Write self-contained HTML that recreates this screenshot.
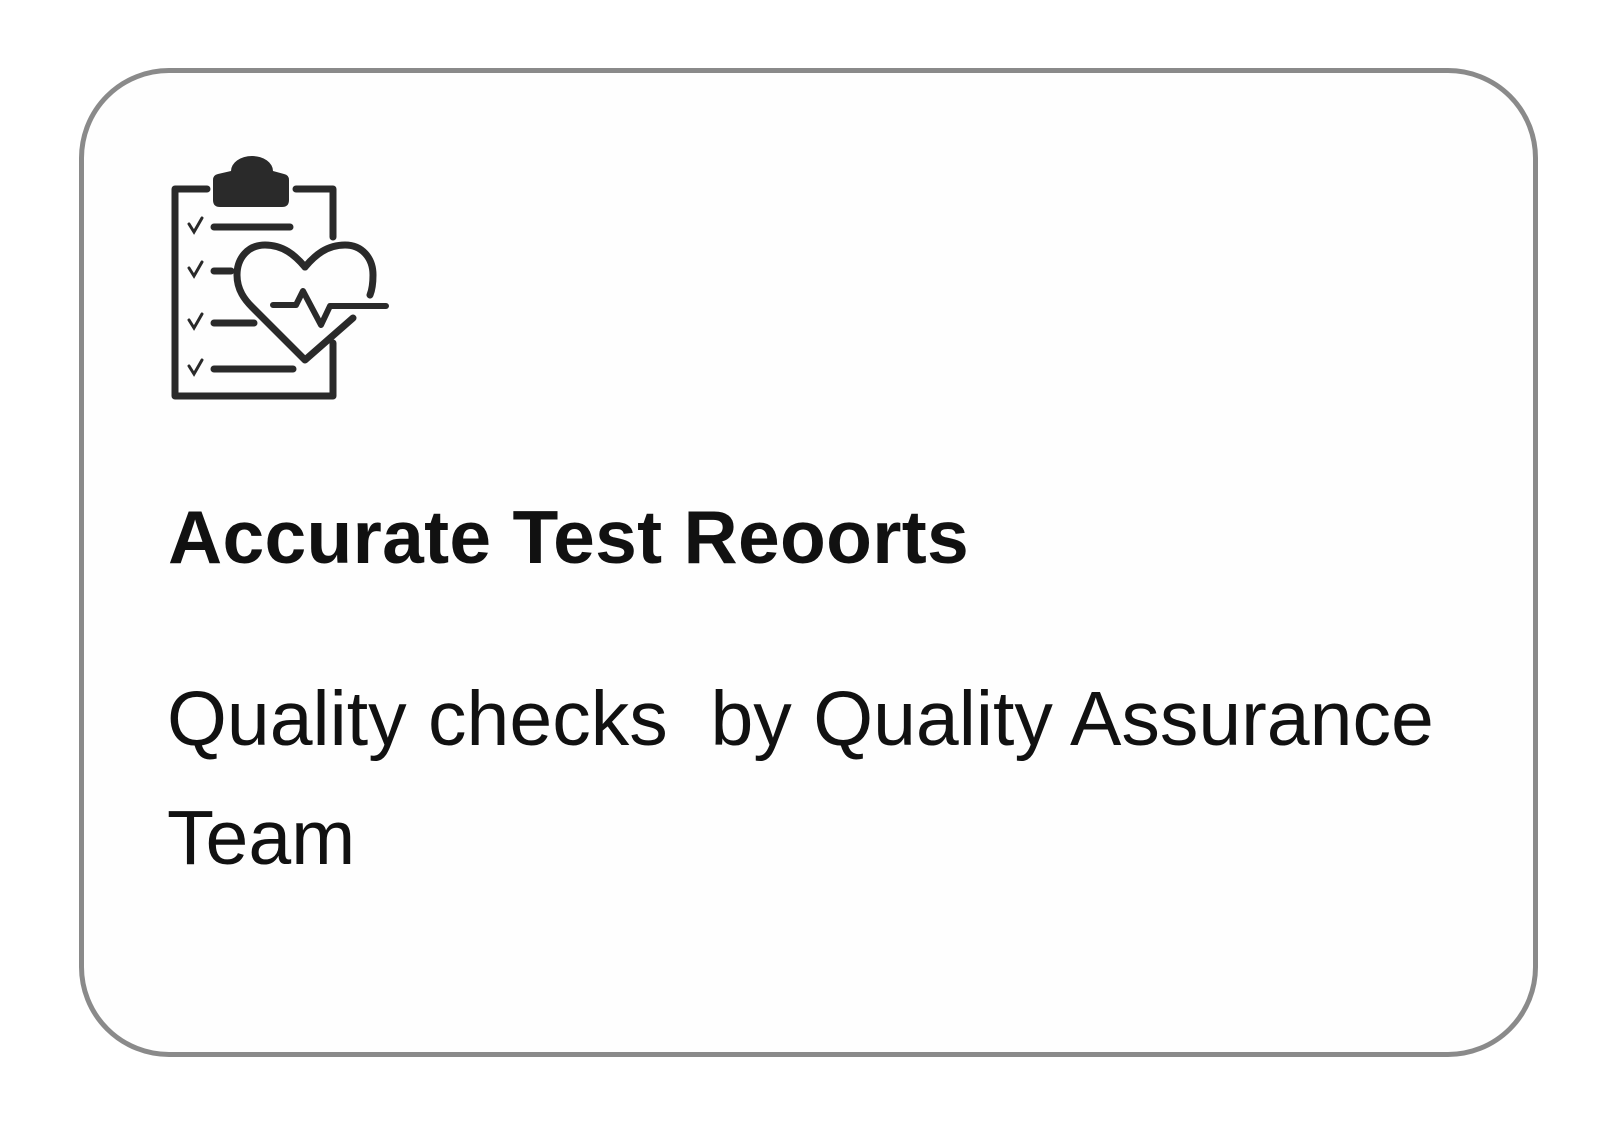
<!DOCTYPE html>
<html><head><style>
html,body{margin:0;padding:0;background:#fff;width:1614px;height:1126px;overflow:hidden;font-family:"Liberation Sans",Arial,sans-serif}
.card{position:absolute;left:79px;top:68px;width:1449px;height:979px;border:5px solid #8a8a8a;border-radius:90px;background:#fefefe}
.t{position:absolute;left:168px;top:494px;font-size:75px;font-weight:bold;color:#111;white-space:nowrap;letter-spacing:0.3px}
.d{position:absolute;left:167px;top:660px;font-size:77px;line-height:119px;color:#111;white-space:pre;width:1340px}
</style></head><body>
<div class="card"></div>
<svg style="position:absolute;left:0;top:0" width="1614" height="1126">
<g fill="none" stroke="#2a2a2a" stroke-width="7" stroke-linecap="round" stroke-linejoin="round">
<path d="M207 189 H175 V396 H333 V343"/>
<path d="M296 189 H333 V237"/>
<path d="M214 227 H290 M214 271 H231 M214 323 H254 M214 369 H293"/>
<path d="M305 267 C295 255 283 245 265 245 C248 245 237 258 237 275 C237 290 245 300 252 307 L305 360 L353 318"/>
<path d="M305 267 C315 255 327 245 345 245 C362 245 373 258 373 275 C373 283 372 290 370 295"/>
<path d="M273 305 H296 L303 291 L321 325 L330 306 H386" stroke-width="6"/>
</g>
<g fill="none" stroke="#2a2a2a" stroke-width="3" stroke-linecap="round">
<path d="M189 224 L194 232 L202 218 M189 268 L194 276 L202 262 M189 320 L194 328 L202 314 M189 366 L194 374 L202 360"/>
</g>
<path fill="#2a2a2a" d="M231 171 A21 15 0 0 1 273 171 L284 174 Q289 175 289 180 V200 Q289 207 282 207 H220 Q213 207 213 200 V180 Q213 175 218 174 Z"/>
</svg>
<div class="t">Accurate Test Reoorts</div>
<div class="d">Quality checks  by Quality Assurance
Team</div>
</body></html>
